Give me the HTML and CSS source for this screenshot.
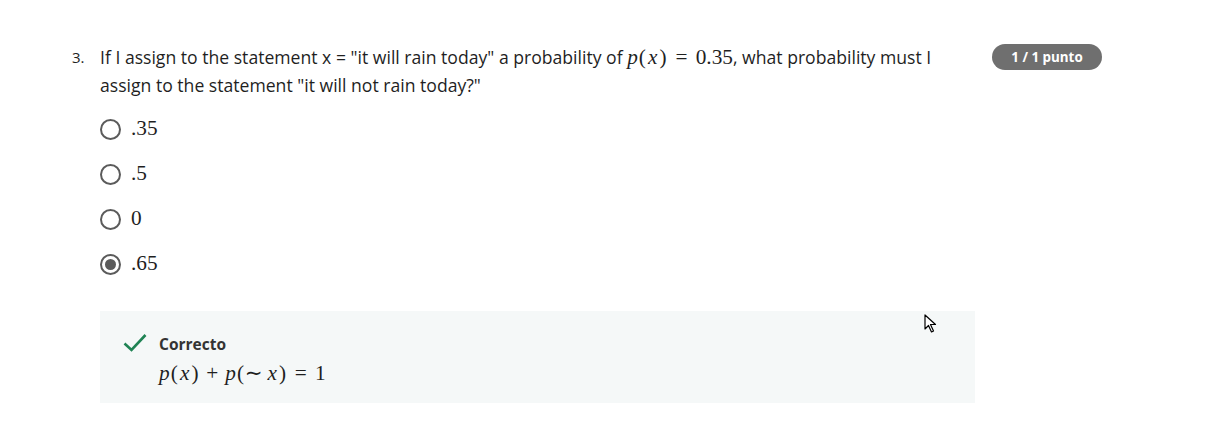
FILE: index.html
```html
<!DOCTYPE html>
<html>
<head>
<meta charset="utf-8">
<link rel="stylesheet" href="styles.css">
</head>
<body>
<div class="question">
  <div class="num">3.</div>
  <div class="main">
    <p class="prompt">If I assign to the statement x = "it will rain today" a probability of <span class="math"><i>p</i><span class="par">(</span><i class="x">x</i><span class="par">)</span><span class="rel">=</span>0.35</span>, what probability must I assign to the statement "it will not rain today?"</p>
    <div class="options">
      <div class="opt"><span class="radio"></span><span class="math">.35</span></div>
      <div class="opt"><span class="radio"></span><span class="math">.5</span></div>
      <div class="opt"><span class="radio"></span><span class="math">0</span></div>
      <div class="opt"><span class="radio checked"></span><span class="math">.65</span></div>
    </div>
    <div class="feedback">
      <svg class="check" width="24" height="20" viewBox="0 0 24 20"><path d="M1.5 10.5 L8.5 17 L22.5 2" fill="none" stroke="#1f8354" stroke-width="2.6"/></svg>
      <div class="fb-body">
        <div class="fb-title">Correcto</div>
        <div class="math fb-math"><i>p</i><span class="par">(</span><i class="x">x</i><span class="par">)</span><span class="bin">+</span><i>p</i><span class="par">(</span><span class="sim">∼</span><i class="x">x</i><span class="par">)</span><span class="rel">=</span>1</div>
      </div>
      <svg class="cursor" width="14" height="20" viewBox="0 0 14 20"><path d="M1 1 L1 15 L4.5 11.5 L7.5 18 L9.5 17 L6.5 10.5 L11.5 10.5 Z" fill="#fff" stroke="#000" stroke-width="1.2" stroke-linejoin="round"/></svg>
    </div>
  </div>
  <div class="badge">1 / 1 punto</div>
</div>
</body>
</html>
```

FILE: styles.css
```css
* { box-sizing: border-box; }
html, body { margin: 0; background: #fff; }
body {
  font-family: "Open Sans", "Liberation Sans", sans-serif;
  color: #1f1f1f;
  font-size: 17.6px;
}
.question {
  display: flex;
  padding: 43px 0 0 72px;
}
.num {
  width: 28px;
  font-size: 15px;
  line-height: 28px;
}
.main {
  width: 875px;
}
.prompt {
  margin: 0;
  line-height: 28px;
  width: 850px;
}
.math {
  font-family: "Liberation Serif", "DejaVu Serif", serif;
  font-size: 21.3px;
  line-height: 1;
}
.math i { padding-right: 0.02em; }
.math i.x { padding: 0 0.07em; }
.par { padding: 0 0.03em; }
.rel { margin: 0 0.385em; }
.bin { margin: 0 0.33em; }
.sim {
  display: inline-block;
  width: 0.72em;
  margin-right: 0.278em;
  text-align: center;
  font-family: "DejaVu Sans", sans-serif;
  font-size: 1em;
}
.options {
  display: flex;
  flex-direction: column;
  gap: 17px;
  margin-top: 16px;
}
.opt {
  display: flex;
  align-items: center;
  gap: 10px;
  height: 28px;
}
.radio {
  width: 21px;
  height: 21px;
  border: 2px solid #5b5b5b;
  border-radius: 50%;
  position: relative;
}
.radio.checked::after {
  content: "";
  position: absolute;
  left: 3px; top: 3px;
  width: 11px; height: 11px;
  border-radius: 50%;
  background: #5b5b5b;
}
.feedback {
  margin-top: 33px;
  background: #f5f8f8;
  height: 92px;
  display: flex;
  padding: 22px 0 0 23px;
  gap: 12px;
  position: relative;
}
.fb-title {
  font-weight: 700;
  font-size: 15.5px;
  line-height: 22px;
  color: #333;
}
.fb-math { margin-top: 7px; }
.cursor {
  position: absolute;
  left: 824px;
  top: 3px;
}
.badge {
  margin-left: 17px;
  margin-top: 1px;
  width: 110px;
  height: 26px;
  border-radius: 13px;
  background: #6f6f6f;
  color: #fff;
  font-size: 13.4px;
  font-weight: 700;
  display: flex;
  align-items: center;
  justify-content: center;
}
```
